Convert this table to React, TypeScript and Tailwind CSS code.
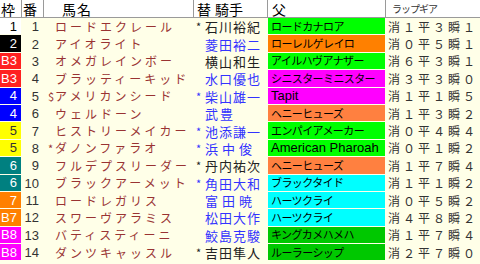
const rows = [
  { w: "1", wc: "bg-white text-black", n: 1, p: "", name: "ロードエクレール", jp: "*", j: "石川裕紀", jc: "text-[#222]", sire: "ロードカナロア", sc: "bg-[#00ff00]", lap: "消１平３瞬１" },
  { w: "2", wc: "bg-black text-white", n: 2, p: "", name: "アイオライト", jp: "", j: "菱田裕二", jc: "text-[#3333ff]", sire: "ローレルゲレイロ", sc: "bg-[#ff8000]", lap: "消０平５瞬１" },
  { w: "B3", wc: "bg-[#ff2020] text-white", n: 3, p: "", name: "オメガレインボー", jp: "", j: "横山和生", jc: "text-[#222]", sire: "アイルハヴアナザー", sc: "bg-[#00ff00]", lap: "消６平３瞬１" },
  { w: "B3", wc: "bg-[#ff2020] text-white", n: 4, p: "", name: "ブラッティーキッド", jp: "", j: "水口優也", jc: "text-[#3333ff]", sire: "シニスターミニスター", sc: "bg-[#ff00ff]", lap: "消３平３瞬０" },
  { w: "4", wc: "bg-[#0000ff] text-white", n: 5, p: "$", name: "アメリカンシード", jp: "*", j: "柴山雄一", jc: "text-[#3333ff]", sire: "Tapit", sc: "bg-[#ff00ff]", lap: "消１平１瞬５" },
  { w: "4", wc: "bg-[#0000ff] text-white", n: 6, p: "", name: "ウェルドーン", jp: "", j: "武豊", jc: "text-[#3333ff]", sire: "ヘニーヒューズ", sc: "bg-[#ff8040]", lap: "消１平３瞬２" },
  { w: "5", wc: "bg-[#ffff00] text-[#333]", n: 7, p: "", name: "ヒストリーメイカー", jp: "*", j: "池添謙一", jc: "text-[#3333ff]", sire: "エンパイアメーカー", sc: "bg-[#00ff00]", lap: "消０平４瞬４" },
  { w: "5", wc: "bg-[#ffff00] text-[#333]", n: 8, p: "*", name: "ダノンファラオ", jp: "*", j: "浜中俊", jc: "text-[#3333ff]", sire: "American Pharoah", sc: "bg-[#00ff00]", lap: "消０平１瞬２" },
  { w: "6", wc: "bg-[#008080] text-white", n: 9, p: "", name: "フルデプスリーダー", jp: "*", j: "丹内祐次", jc: "text-[#222]", sire: "ヘニーヒューズ", sc: "bg-[#ff8040]", lap: "消１平７瞬４" },
  { w: "6", wc: "bg-[#008080] text-white", n: 10, p: "", name: "ブラックアーメット", jp: "*", j: "角田大和", jc: "text-[#3333ff]", sire: "ブラックタイド", sc: "bg-[#00ffff]", lap: "消１平１瞬２" },
  { w: "7", wc: "bg-[#ff8000] text-white", n: 11, p: "", name: "ロードレガリス", jp: "", j: "富田暁", jc: "text-[#3333ff]", sire: "ハーツクライ", sc: "bg-[#00ffff]", lap: "消０平５瞬２" },
  { w: "B7", wc: "bg-[#ff8000] text-white", n: 12, p: "", name: "スワーヴアラミス", jp: "", j: "松田大作", jc: "text-[#3333ff]", sire: "ハーツクライ", sc: "bg-[#00ffff]", lap: "消４平８瞬２" },
  { w: "B8", wc: "bg-[#ff00ff] text-white", n: 13, p: "", name: "バティスティーニ", jp: "", j: "鮫島克駿", jc: "text-[#3333ff]", sire: "キングカメハメハ", sc: "bg-[#00c800]", lap: "消１平７瞬４" },
  { w: "B8", wc: "bg-[#ff00ff] text-white", n: 14, p: "", name: "ダンツキャッスル", jp: "*", j: "吉田隼人", jc: "text-[#222]", sire: "ルーラーシップ", sc: "bg-[#00c800]", lap: "消２平７瞬０" },
]

// jockey name spacing depends on length (the source spreads short names out)
function jockeySpacing(name: string) {
  if (name.length === 2) return "tracking-[2px]"
  if (name.length === 3) return "tracking-[4px]"
  return "tracking-[1px]"
}

export default function App() {
  const cols = "grid grid-cols-[22px_22px_150px_74px_118px_1fr]"
  return (
    <div className="w-[480px] h-[264px] bg-[#ffffe8] overflow-hidden font-['Liberation_Sans','Noto_Sans_CJK_JP',sans-serif]">
      {/* Header */}
      <div className={`${cols} h-[18px] bg-white border-b border-[#9a9a9a] text-[14px] leading-none text-black font-['Noto_Sans_CJK_JP',sans-serif]`}>
        <div className="border-r border-[#9a9a9a] flex items-center pl-px">枠</div>
        <div className="border-r border-[#9a9a9a] flex items-center pl-px">番</div>
        <div className="border-r border-[#9a9a9a] flex items-center pl-[18px] tracking-[1px]">馬名</div>
        <div className="border-r border-[#9a9a9a] flex items-center pl-[3px]">
          <span>替</span>
          <span className="ml-[4px]">騎手</span>
        </div>
        <div className="border-r border-[#9a9a9a] flex items-center pl-[4px]">父</div>
        <div className="flex items-center pl-[6px] text-[10px] tracking-[-1px] text-[#333]">ラップギア</div>
      </div>

      {/* Rows */}
      {rows.map((r) => (
        <div key={r.n} className={`${cols} h-[17.4px]`}>
          <div className="pr-px pb-px">
            <div className={`h-full flex items-center justify-end pr-[4px] text-[13px] leading-none ${r.wc}`}>{r.w}</div>
          </div>
          <div className="flex items-center justify-end pr-[5px] text-[13px] leading-none text-[#333]">{r.n}</div>
          <div className="flex items-center pl-[4px] text-[12px] leading-none text-[#993333] font-['Noto_Sans_CJK_JP',sans-serif] whitespace-nowrap">
            <span className="w-[7px] text-[11px]">{r.p}</span>
            <span className="tracking-[3px]">{r.name}</span>
          </div>
          <div className={`flex items-center pl-[2px] text-[13px] leading-none whitespace-nowrap font-['Noto_Sans_CJK_JP',sans-serif] ${r.jc}`}>
            <span className="w-[9px] text-[11px]">{r.jp}</span>
            <span className={jockeySpacing(r.j)}>{r.j}</span>
          </div>
          <div className="pr-px pb-px">
            <div className={`h-full flex items-center pl-[3px] text-black whitespace-nowrap overflow-hidden ${r.sc}`}>
              {/^[A-Za-z]/.test(r.sire) ? (
                <span className="text-[13px] leading-none">{r.sire}</span>
              ) : (
                <span className="text-[11px] leading-none tracking-[-0.6px] font-['Noto_Sans_CJK_JP',sans-serif]">{r.sire}</span>
              )}
            </div>
          </div>
          <div className="flex items-center pl-[2px] text-[12px] leading-none tracking-[3px] text-[#333] whitespace-nowrap font-['Noto_Sans_CJK_JP',sans-serif]">
            {r.lap}
          </div>
        </div>
      ))}
    </div>
  )
}
